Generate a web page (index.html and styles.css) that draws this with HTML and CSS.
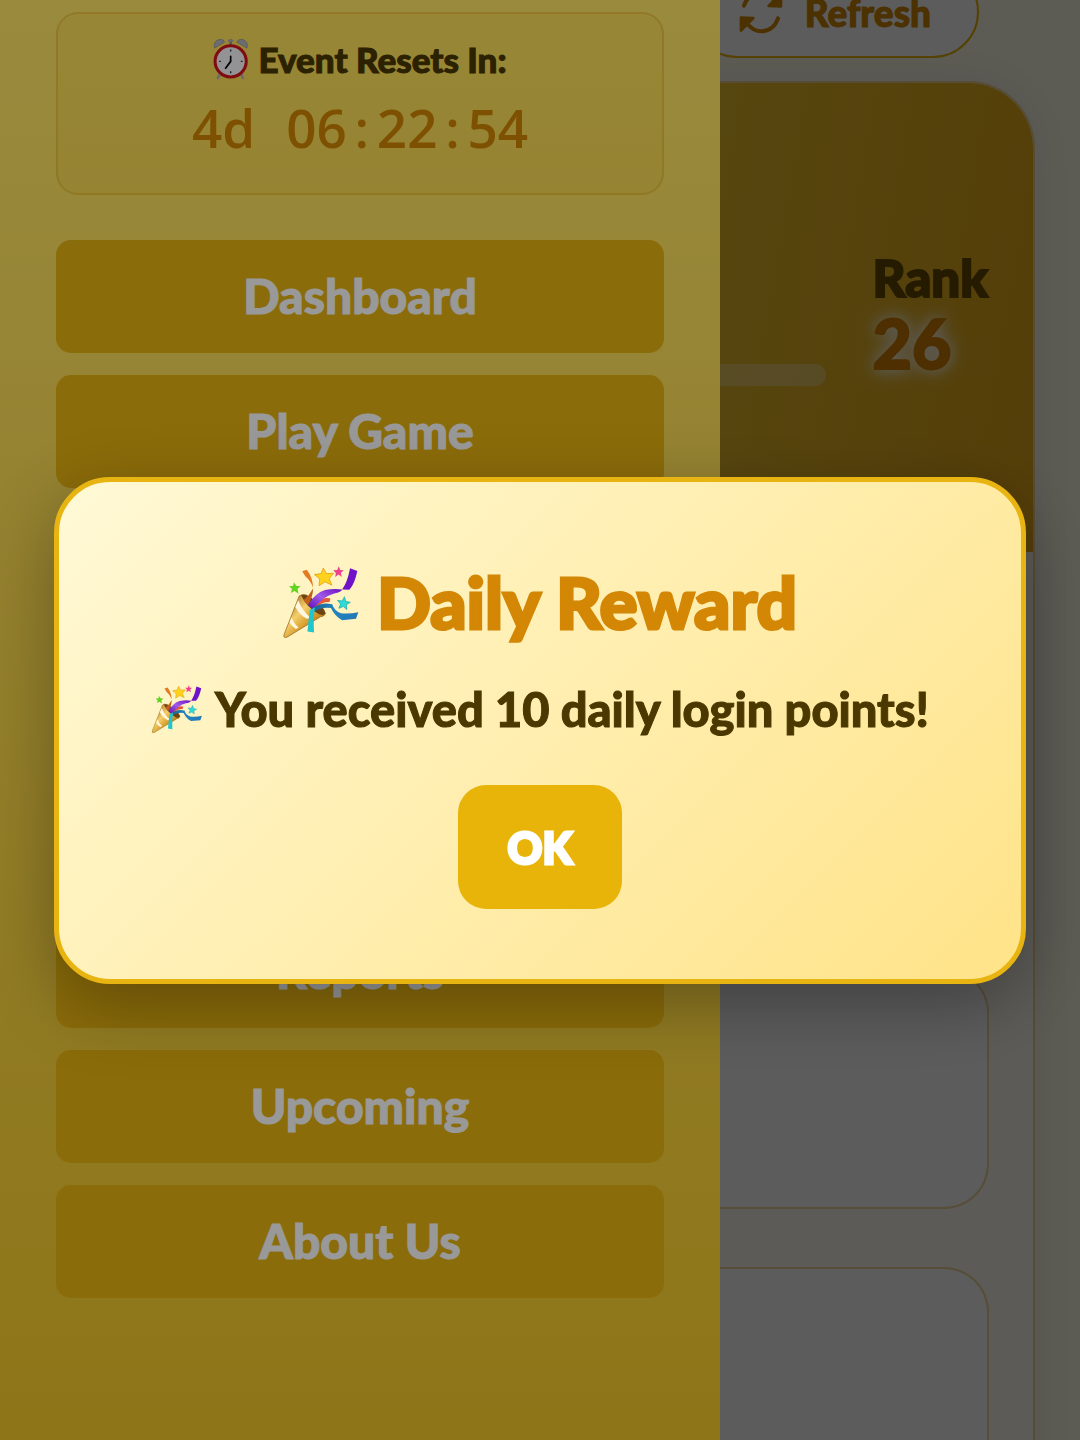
FILE: index.html
```html
<!DOCTYPE html>
<html lang="en">
<head>
    <meta charset="UTF-8">
    <meta name="viewport" content="width=device-width, initial-scale=1.0">
    <title>Daily Reward</title>
    <link rel="stylesheet" href="styles.css">
</head>
<body>
    <!-- shared icons -->
    <svg class="sprite" aria-hidden="true">
        <defs>
            <linearGradient id="gold" x1="0" y1="0" x2="1" y2="1">
                <stop offset="0" stop-color="#8a5310"/>
                <stop offset="0.4" stop-color="#f5cf6a"/>
                <stop offset="0.65" stop-color="#d0901f"/>
                <stop offset="1" stop-color="#7a470c"/>
            </linearGradient>
            <linearGradient id="purple" x1="0" y1="1" x2="1" y2="0">
                <stop offset="0" stop-color="#5a0bb5"/>
                <stop offset="0.5" stop-color="#a05ae8"/>
                <stop offset="1" stop-color="#6a0fc4"/>
            </linearGradient>
            <linearGradient id="blue" x1="0" y1="0" x2="1" y2="0">
                <stop offset="0" stop-color="#1c5f8c"/>
                <stop offset="0.5" stop-color="#2384c0"/>
                <stop offset="1" stop-color="#2277b5"/>
            </linearGradient>
        </defs>
        <symbol id="popper" viewBox="68 54 228 218">
            <path d="M116 145Q124 138 138 142L196 196Q194 206 180 208L80 269Q67 274 70 262Z" fill="url(#gold)" stroke="#8a5a18" stroke-width="2"/>
            <path d="M122 143Q136 136 158 155Q196 182 195 197Q190 206 176 200Q140 180 122 143Z" fill="#6e4312"/>
            <path d="M113 158L104 178Q118 204 140 214L152 212Q126 192 113 158ZM93 209L87 224Q94 238 106 245L114 240Q98 226 93 209Z" fill="#fff6de"/>
            <path d="M125 70L139 65Q157 88 158 119Q150 98 135 86Z" fill="#e27a22"/>
            <path d="M158 122Q158 146 142 174L129 158Q146 144 158 122Z" fill="#c0601b"/>
            <path d="M160 172Q178 146 210 152L208 163Q184 162 166 180Z" fill="#e25a35"/>
            <path d="M143 172Q164 136 194 127Q220 121 246 125Q244 133 222 137Q184 148 158 186Z" fill="url(#purple)"/>
            <path d="M270 61L292 69Q284 108 268 126L246 125Q262 104 270 61Z" fill="#7012c8"/>
            <path d="M150 190Q176 160 216 170Q222 190 242 197Q268 200 295 194L288 214L246 218Q224 206 212 181Q182 176 152 198Z" fill="url(#blue)"/>
            <path d="M148 187L164 179Q158 212 161 255L141 252Q144 218 148 187Z" fill="#22c5cc"/>
            <path d="M189 60L199 77L220 76L207 92L215 112L194 102L176 114L178 93L162 80L182 77Z" fill="#ffd21c" stroke="#d9930a" stroke-width="2"/>
            <path d="M236 55L240 66L251 67L242 75L245 87L235 80L225 87L227 75L219 67L231 66Z" fill="#f0418f"/>
            <path d="M100 103L107 114L120 115L111 124L114 138L102 130L91 136L94 123L85 116L98 114Z" fill="#62d322"/>
            <path d="M253 147L257 161L271 164L259 171L260 186L250 177L236 182L241 169L232 158L246 160Z" fill="#2fd9d6" stroke="#18a5a5" stroke-width="2"/>
        </symbol>
        <symbol id="clock" viewBox="512 118 106 124">
            <path d="M534 222L526 236M594 222L600 236" stroke="#b5b5b5" stroke-width="8" stroke-linecap="round"/>
            <path d="M564 122V142" stroke="#8d8d8d" stroke-width="7"/>
            <path d="M556 126H572" stroke="#b0b0b0" stroke-width="6"/>
            <path d="M516 148Q512 126 532 122Q544 121 546 130ZM612 148Q618 128 598 122Q586 121 582 130Z" fill="#b5b5bd" stroke="#8b8b92" stroke-width="2"/>
            <circle cx="564" cy="187" r="46" fill="#f6f6fa" stroke="#d6141e" stroke-width="9"/>
            <path d="M564 172V187L549 207" fill="none" stroke="#000" stroke-width="5" stroke-linecap="round"/>
            <path d="M564 152V158M564 216V222M530 187H535M594 187H599" stroke="#333" stroke-width="4"/>
        </symbol>
        <symbol id="rotate" viewBox="118 -36 132 132">
            <g fill="currentColor" stroke="currentColor" stroke-linecap="round" stroke-linejoin="round">
                <path d="M124 47L161 48L124 86Z" stroke-width="8"/>
                <path d="M244 13L207 12L244 -26Z" stroke-width="8"/>
                <path d="M142 64Q160 88 186 88Q222 86 235 49M226 -4Q208 -28 182 -28Q146 -26 133 11" fill="none" stroke-width="12"/>
            </g>
        </symbol>
    </svg>

    <main class="page">
        <div class="toolbar">
            <button class="refresh-btn" type="button">
                <svg class="refresh-icon" aria-hidden="true"><use href="#rotate"/></svg>
                Refresh
            </button>
        </div>
        <section class="profile">
            <div class="profile-header">
                <div class="progress"></div>
                <div class="rank">
                    <div class="rank-label">Rank</div>
                    <div class="rank-value">26</div>
                </div>
            </div>
            <div class="panels">
                <div class="panel panel-tall"></div>
                <div class="panel"></div>
                <div class="panel"></div>
            </div>
        </section>
    </main>

    <div class="backdrop"></div>

    <aside class="sidebar">
        <div class="timer">
            <div class="timer-label">
                <svg class="timer-icon" aria-hidden="true"><use href="#clock"/></svg>
                Event Resets In:
            </div>
            <div class="timer-value">
                <span class="days">4d</span>
                <span>06</span><span class="colon">:</span><span>22</span><span class="colon">:</span><span>54</span>
            </div>
        </div>
        <nav class="menu">
            <button class="menu-btn" type="button">Dashboard</button>
            <button class="menu-btn" type="button">Play Game</button>
            <button class="menu-btn" type="button"></button>
            <button class="menu-btn" type="button"></button>
            <button class="menu-btn" type="button"></button>
            <button class="menu-btn" type="button">Reports</button>
            <button class="menu-btn" type="button">Upcoming</button>
            <button class="menu-btn" type="button">About Us</button>
        </nav>
    </aside>

    <div class="modal-overlay" id="reward">
        <div class="modal" role="dialog" aria-labelledby="reward-title">
            <h2 class="modal-title" id="reward-title">
                <svg class="title-icon" aria-hidden="true"><use href="#popper"/></svg>
                Daily Reward
            </h2>
            <p class="modal-text">
                <svg class="text-icon" aria-hidden="true"><use href="#popper"/></svg>
                You received 10 daily login points!
            </p>
            <button class="ok-btn" type="button" onclick="closeReward()">OK</button>
        </div>
    </div>

    <script>
        function closeReward() {
            document.getElementById('reward').style.display = 'none';
        }
    </script>
</body>
</html>
```

FILE: styles.css
```css
* {
    box-sizing: border-box;
}
body {
    margin: 0;
    height: 100vh;
    overflow: hidden;
    font-family: Lato, sans-serif;
    font-weight: 900;
    color: #4a3800;
    background: #fffee9;
}
button {
    font-family: inherit;
    font-weight: inherit;
    cursor: pointer;
}
.sprite {
    position: absolute;
    width: 0;
    height: 0;
}

/* page under the drawer */
.page {
    height: 100vh;
    overflow: hidden;
    padding: 0 45px;
}
.toolbar {
    display: flex;
    justify-content: flex-end;
    padding-right: 56px;
    margin: -34px 0 23px;
}
.refresh-btn {
    display: flex;
    align-items: center;
    gap: 22px;
    height: 92px;
    padding: 0 46px;
    font-size: 37px;
    color: #d38704;
    -webkit-text-stroke: 1px;
    background: white;
    border: 2px solid #eab308;
    border-radius: 46px;
}
.refresh-icon {
    width: 44px;
    height: 44px;
}
.profile {
    border: 2px solid rgba(217, 150, 8, 0.4);
    border-radius: 67px;
    overflow: hidden;
    background: #fffbf0;
    box-shadow: 0 0 45px rgba(120, 100, 160, 0.15);
}
.profile-header {
    display: flex;
    justify-content: flex-end;
    align-items: center;
    gap: 46px;
    height: 469px;
    padding: 0 45px 10px 0;
    background: linear-gradient(100deg, #eed050, #f0c52c 60%, #e9ab18);
}
.progress {
    flex: 1;
    height: 22px;
    margin-top: 124px;
    border-radius: 11px;
    background: rgba(255, 255, 255, 0.3);
}
.rank-label {
    font-size: 51px;
    line-height: 60px;
    color: #674b00;
    -webkit-text-stroke: 2px;
}
.rank-value {
    font-size: 68px;
    line-height: 70px;
    color: #d98204;
    -webkit-text-stroke: 2px;
    text-shadow: 0 0 14px white, 0 0 22px white;
}
.panels {
    display: flex;
    flex-direction: column;
    gap: 58px;
    padding: 44px;
}
.panel {
    height: 241px;
    flex-shrink: 0;
    background: white;
    border: 2px solid rgba(217, 150, 8, 0.4);
    border-radius: 45px;
}
.panel-tall {
    height: 314px;
}
.backdrop {
    position: fixed;
    inset: 0;
    background: rgba(0, 0, 0, 0.4);
}

/* drawer */
.sidebar {
    position: fixed;
    top: 0;
    bottom: 0;
    left: 0;
    width: calc(100% * 2 / 3);
    padding: 12px 56px;
    background: linear-gradient(#ffe768, #edc328);
}
.timer {
    display: flex;
    flex-direction: column;
    align-items: center;
    padding: 22px;
    margin-bottom: 45px;
    border: 2px solid rgba(217, 150, 8, 0.3);
    border-radius: 22px;
    background: rgba(234, 179, 8, 0.12);
}
.timer-label {
    display: flex;
    align-items: center;
    gap: 9px;
    font-size: 35px;
    line-height: 46px;
    -webkit-text-stroke: 1px;
}
.timer-icon {
    width: 36px;
    height: 42px;
}
.timer-value {
    display: flex;
    height: 89px;
    font-family: "Open Sans", sans-serif;
    font-size: 53px;
    font-weight: 600;
    line-height: 92px;
    color: #d38704;
}
.days {
    margin-right: 31px;
}
.colon {
    width: 30px;
    text-align: center;
}
.menu {
    display: flex;
    flex-direction: column;
    gap: 22px;
}
.menu-btn {
    height: 113px;
    padding: 0 20px 2px;
    font-size: 48px;
    color: white;
    background: #e8b412;
    border: none;
    border-radius: 15px;
    -webkit-text-stroke: 1px;
}

/* reward popup */
.modal-overlay {
    position: fixed;
    inset: 0;
    display: flex;
    align-items: center;
    justify-content: center;
    padding-top: 21px;
    background: rgba(0, 0, 0, 0.4);
}
.modal {
    display: flex;
    flex-direction: column;
    align-items: center;
    width: 90%;
    padding: 70px 30px;
    border: 5px solid #e8b412;
    border-radius: 56px;
    background: linear-gradient(135deg, #fff9d6, #ffe388);
    box-shadow: 0 22px 70px rgba(0, 0, 0, 0.3);
}
.modal-title {
    display: flex;
    align-items: center;
    gap: 18px;
    margin: 0 0 22px;
    font-size: 71px;
    font-weight: 900;
    line-height: 100px;
    color: #d38704;
    -webkit-text-stroke: 3px;
}
.title-icon {
    width: 76px;
    height: 72px;
}
.modal-text {
    display: flex;
    align-items: center;
    gap: 12px;
    margin: 0 0 41px;
    font-size: 47px;
    line-height: 70px;
    -webkit-text-stroke: 1px;
}
.text-icon {
    width: 52px;
    height: 48px;
}
.ok-btn {
    width: 164px;
    height: 124px;
    font-size: 43px;
    color: white;
    background: #e8b40a;
    border: none;
    border-radius: 28px;
    -webkit-text-stroke: 3px;
}
```
